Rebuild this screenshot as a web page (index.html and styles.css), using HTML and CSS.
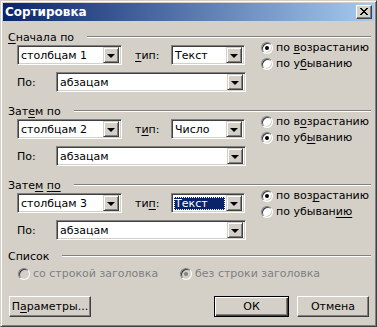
FILE: index.html
```html
<!DOCTYPE html>
<html>
<head>
<meta charset="utf-8">
<title>Сортировка</title>
<link rel="stylesheet" href="styles.css">
</head>
<body>
<div class="window">
  <div class="titlebar">
    <span class="title">Сортировка</span>
    <span class="close">
      <svg width="8" height="7" viewBox="0 0 8 7" shape-rendering="crispEdges"><path d="M0 0h2v1H0zM6 0h2v1H6zM1 1h2v1H1zM5 1h2v1H5zM2 2h4v1H2zM3 3h2v1H3zM2 4h4v1H2zM1 5h2v1H1zM5 5h2v1H5zM0 6h2v1H0zM6 6h2v1H6z" fill="#000"/></svg>
    </span>
  </div>
  <div class="content">
    <section class="group">
      <div class="group-head"><span class="group-label"><u>С</u>начала по</span><i class="rule"></i></div>
      <div class="group-body">
        <div class="fields">
          <div class="row">
            <div class="combo w-col"><span class="val">столбцам 1</span><span class="drop"><i class="arrow"></i></span></div>
            <span class="lbl-type"><u>т</u>ип:</span>
            <div class="combo w-type"><span class="val">Текст</span><span class="drop"><i class="arrow"></i></span></div>
          </div>
          <div class="row row2">
            <span class="lbl-po">По:</span>
            <div class="combo w-po"><span class="val">абзацам</span><span class="drop"><i class="arrow"></i></span></div>
          </div>
        </div>
        <div class="radios">
          <div class="radio checked"><span class="rbox"></span><span>по <u>в</u>озрастанию</span></div>
          <div class="radio"><span class="rbox"></span><span>по у<u>б</u>ыванию</span></div>
        </div>
      </div>
    </section>

    <section class="group">
      <div class="group-head"><span class="group-label">Зат<u>е</u>м по</span><i class="rule"></i></div>
      <div class="group-body">
        <div class="fields">
          <div class="row">
            <div class="combo w-col"><span class="val">столбцам 2</span><span class="drop"><i class="arrow"></i></span></div>
            <span class="lbl-type">т<u>и</u>п:</span>
            <div class="combo w-type"><span class="val">Число</span><span class="drop"><i class="arrow"></i></span></div>
          </div>
          <div class="row row2">
            <span class="lbl-po">По:</span>
            <div class="combo w-po"><span class="val">абзацам</span><span class="drop"><i class="arrow"></i></span></div>
          </div>
        </div>
        <div class="radios">
          <div class="radio"><span class="rbox"></span><span>по в<u>о</u>зрастанию</span></div>
          <div class="radio checked"><span class="rbox"></span><span>по уб<u>ы</u>ванию</span></div>
        </div>
      </div>
    </section>

    <section class="group">
      <div class="group-head"><span class="group-label">Зате<u>м</u> <u>по</u></span><i class="rule"></i></div>
      <div class="group-body">
        <div class="fields">
          <div class="row">
            <div class="combo w-col"><span class="val">столбцам 3</span><span class="drop"><i class="arrow"></i></span></div>
            <span class="lbl-type">ти<u>п</u>:</span>
            <div class="combo w-type focused"><span class="val"><span class="sel">Текст</span></span><span class="drop"><i class="arrow"></i></span></div>
          </div>
          <div class="row row2">
            <span class="lbl-po">По:</span>
            <div class="combo w-po"><span class="val">абзацам</span><span class="drop"><i class="arrow"></i></span></div>
          </div>
        </div>
        <div class="radios">
          <div class="radio checked"><span class="rbox"></span><span>по воз<u>р</u>астанию</span></div>
          <div class="radio"><span class="rbox"></span><span>по убыван<u>ию</u></span></div>
        </div>
      </div>
    </section>

    <section class="group list-group">
      <div class="group-head"><span class="group-label">Список</span><i class="rule"></i></div>
      <div class="list-row">
        <div class="radio disabled first"><span class="rbox"></span><span class="dis">со строкой заголовка</span></div>
        <div class="radio disabled checked"><span class="rbox"></span><span class="dis">без строки заголовка</span></div>
      </div>
    </section>

    <div class="buttons">
      <button class="btn btn-params">П<u>а</u>раметры...</button>
      <span class="spacer"></span>
      <button class="btn btn-ok default">ОК</button>
      <button class="btn btn-cancel">Отмена</button>
    </div>
  </div>
</div>
</body>
</html>
```

FILE: styles.css
```css
* { box-sizing: border-box; }
html, body { margin: 0; padding: 0; background: #d4d0c8; }
body {
  font-family: "DejaVu Sans", "Liberation Sans", sans-serif;
  font-size: 11px;
  line-height: 13px;
  color: #000;
}
u { text-decoration: underline; text-underline-offset: 2px; }

.window {
  width: 377px;
  height: 327px;
  background: #d4d0c8;
  border: 1px solid;
  border-color: #d4d0c8 #404040 #404040 #d4d0c8;
  box-shadow: inset 1px 1px #ffffff, inset -1px -1px #808080;
  padding: 2px;
  display: flex;
  flex-direction: column;
}

.titlebar {
  height: 18px;
  background: linear-gradient(to right, #0a246a, #a6caf0);
  display: flex;
  align-items: center;
  padding: 0 2px 0 2px;
}
.title {
  color: #fff;
  font-weight: bold;
  font-size: 12px;
  flex: 1;
}
.close {
  width: 16px;
  height: 14px;
  background: #d4d0c8;
  border: 1px solid;
  border-color: #ffffff #404040 #404040 #ffffff;
  box-shadow: inset -1px -1px #808080;
  display: flex;
  align-items: center;
  justify-content: center;
  padding: 0 1px 1px 0;
}
.close svg { display: block; }

.content {
  padding: 10px 2px 0 5px;
  display: flex;
  flex-direction: column;
}

.group { margin-bottom: 13px; }
.group-head {
  display: flex;
  align-items: center;
  height: 13px;
}
.rule {
  flex: 1;
  height: 2px;
  border-top: 1px solid #808080;
  border-bottom: 1px solid #ffffff;
  margin-left: 13px;
  margin-right: 1px;
  margin-top: -2px;
}

.group-body {
  display: flex;
  padding-left: 9px;
  margin-top: 1px;
}
.fields { width: 237px; }
.row { display: flex; align-items: center; height: 20px; }
.row2 { margin-top: 7px; }

.combo {
  height: 20px;
  background: #fff;
  border: 1px solid;
  border-color: #808080 #ffffff #ffffff #808080;
  box-shadow: inset 1px 1px #404040, inset -1px -1px #d4d0c8;
  padding: 2px;
  display: flex;
  align-items: center;
}
.w-col { width: 105px; }
.w-type { width: 74px; }
.w-po { width: 190px; margin-left: 22px; }
.val { flex: 1; padding-left: 1px; white-space: nowrap; overflow: hidden; }
.drop {
  width: 16px;
  height: 16px;
  background: #d4d0c8;
  border: 1px solid;
  border-color: #d4d0c8 #404040 #404040 #d4d0c8;
  box-shadow: inset 1px 1px #ffffff, inset -1px -1px #808080;
  display: flex;
  align-items: center;
  justify-content: center;
}
.arrow {
  width: 0; height: 0;
  border-left: 4px solid transparent;
  border-right: 4px solid transparent;
  border-top: 4px solid #000;
  margin-top: 1px;
}
.lbl-type { width: 36px; margin-left: 13px; }
.lbl-po { width: 17px; }

.focused .sel {
  background: #0a246a;
  color: #fff;
  outline: 1px dotted #ffffff;
  outline-offset: -1px;
  display: block;
  padding: 0 1px;
  margin-left: -1px;
  margin-right: 1px;
}

.radios {
  margin-left: 7px;
  display: flex;
  flex-direction: column;
  gap: 3px;
  margin-top: -4px;
}
.radio { display: flex; align-items: center; gap: 3px; height: 13px; }
.rbox {
  width: 12px;
  height: 12px;
  border-radius: 50%;
  background: #fff;
  border: 1px solid;
  border-color: #808080 #ffffff #ffffff #808080;
  box-shadow: inset 1px 1px #404040, inset -1px -1px #d4d0c8;
  display: flex;
  align-items: center;
  justify-content: center;
  flex: none;
}
.radio.checked .rbox::after {
  content: "";
  width: 4px;
  height: 4px;
  border-radius: 50%;
  background: #000;
}
.radio.disabled .rbox { background: #d4d0c8; }
.radio.disabled.checked .rbox::after { background: #808080; }
.dis { color: #808080; }

.list-group { margin-top: -3px; margin-bottom: 0; }
.list-row { display: flex; padding-left: 10px; margin-top: 4px; }
.list-row .first { width: 162px; }

.buttons {
  display: flex;
  margin-top: 16px;
  padding-left: 1px;
}
.spacer { flex: 1; }
.btn {
  font: inherit;
  height: 21px;
  background: #d4d0c8;
  border: 1px solid;
  border-color: #ffffff #404040 #404040 #ffffff;
  box-shadow: inset -1px -1px #808080;
  padding: 0;
  color: #000;
}
.btn-params { width: 82px; }
.btn-ok { width: 75px; }
.btn-cancel { width: 72px; margin-left: 8px; margin-right: 3px; }
.btn.default {
  border: 1px solid #000;
  box-shadow: inset 1px 1px #ffffff, inset -1px -1px #404040, inset -2px -2px #808080;
}
```
